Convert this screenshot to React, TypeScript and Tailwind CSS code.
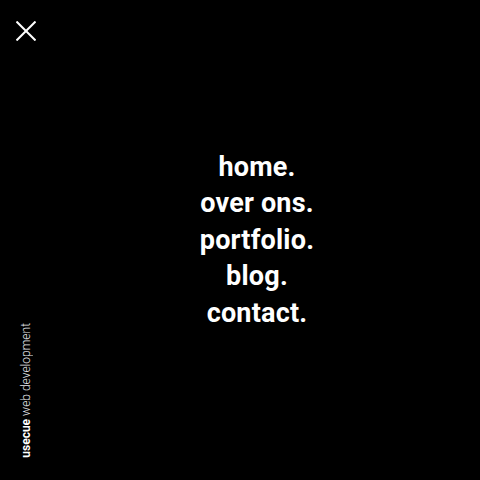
const links = ["home.", "over ons.", "portfolio.", "blog.", "contact."];

export default function App() {
  return (
    <div className="flex h-[480px] w-[480px] bg-black text-white" style={{ fontFamily: "Roboto, 'Liberation Sans', sans-serif" }}>
      {/* sidebar */}
      <div className="flex w-[52px] flex-col items-center justify-between pb-[22px] pt-[21px]">
        <button className="block h-5 w-5 text-white">
          <svg width="20" height="20" viewBox="0 0 20 20" fill="none" stroke="currentColor" strokeWidth="2">
            <line x1="0.5" y1="0.5" x2="19.5" y2="19.5" />
            <line x1="19.5" y1="0.5" x2="0.5" y2="19.5" />
          </svg>
        </button>
        <div className="rotate-180 whitespace-nowrap text-[12px] leading-none [writing-mode:vertical-rl]">
          <span className="font-bold">usecue</span>{" "}
          <span className="font-light text-gray-200">web development</span>
        </div>
      </div>

      {/* menu */}
      <nav className="mr-[18px] flex flex-1 flex-col items-center justify-center">
        {links.map((l) => (
          <a key={l} href="#" className="text-[27px] font-bold leading-[36.5px] tracking-[0.2px]">
            {l}
          </a>
        ))}
      </nav>
    </div>
  );
}
